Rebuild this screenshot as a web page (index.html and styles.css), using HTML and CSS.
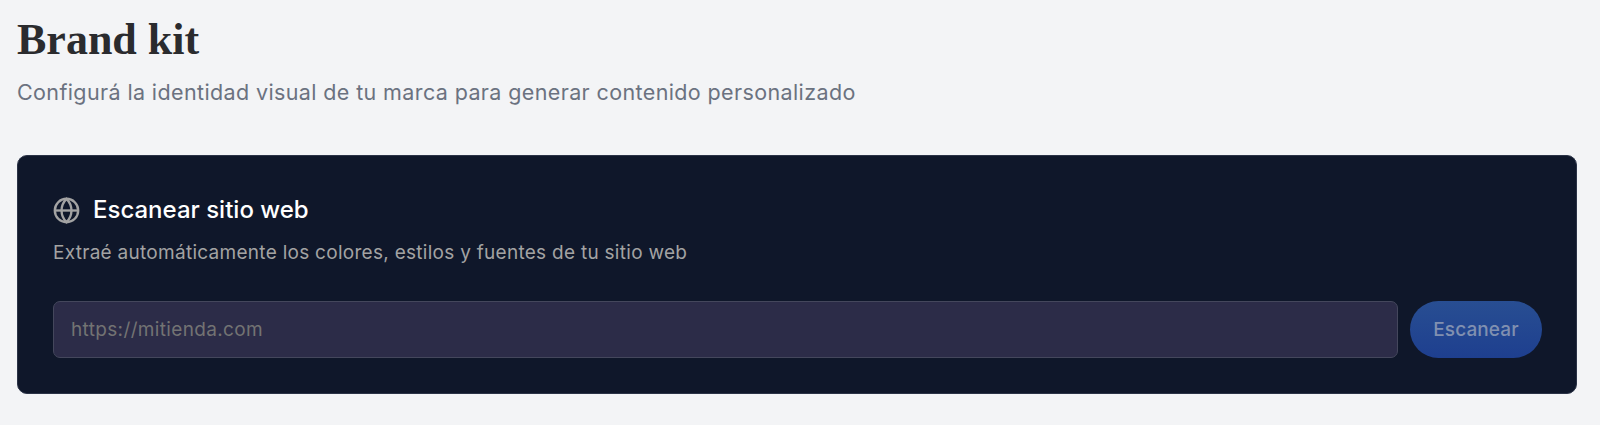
FILE: index.html
```html
<!DOCTYPE html>
<html lang="es">
<head>
    <meta charset="UTF-8">
    <meta name="viewport" content="width=device-width, initial-scale=1.0">
    <title>Brand kit</title>
    <link rel="stylesheet" href="styles.css">
</head>
<body>

    <h1 class="page-title">Brand kit</h1>
    <p class="page-subtitle">Configurá la identidad visual de tu marca para generar contenido personalizado</p>

    <div class="scan-card">
        <div class="scan-header">
            <svg class="scan-icon" viewBox="0 0 24 24" fill="none" stroke="currentColor" stroke-width="2.1">
                <circle cx="12" cy="12" r="10.4"></circle>
                <path d="M1.6 12h20.8"></path>
                <path d="M12 1.6c2.9 2.9 4.4 6.4 4.4 10.4s-1.5 7.5-4.4 10.4c-2.9-2.9-4.4-6.4-4.4-10.4s1.5-7.5 4.4-10.4z"></path>
            </svg>
            <h2 class="scan-title">Escanear sitio web</h2>
        </div>
        <p class="scan-text">Extraé automáticamente los colores, estilos y fuentes de tu sitio web</p>

        <div class="scan-form">
            <input class="scan-input" type="text" placeholder="https://mitienda.com">
            <button class="scan-button">Escanear</button>
        </div>
    </div>

</body>
</html>
```

FILE: styles.css
```css
body {
    font-family: 'Inter', 'Liberation Sans', sans-serif;
    background-color: #f3f4f6;
    margin: 0;
    padding: 16px 23px 0 17px;
}
.page-title {
    font-family: 'Liberation Serif', serif;
    font-size: 44px;
    line-height: 48px;
    font-weight: 700;
    color: #2a2b2e;
    margin: 0;
}
.page-subtitle {
    font-size: 21.5px;
    line-height: 28px;
    letter-spacing: 0.38px;
    color: #6b7280;
    margin: 14px 0 0;
}
.scan-card {
    background-color: #0f172a;
    border: 1px solid #2b3347;
    border-radius: 10px;
    padding: 38px 34px 35px 35px;
    margin-top: 49px;
}
.scan-header {
    display: flex;
    align-items: center;
    gap: 13px;
}
.scan-icon {
    width: 27px;
    height: 27px;
    color: #a3a3a3;
}
.scan-title {
    font-size: 24px;
    line-height: 32px;
    font-weight: 500;
    color: #ffffff;
    margin: 0;
}
.scan-text {
    font-size: 19px;
    line-height: 26px;
    letter-spacing: 0.28px;
    color: #a3a3a3;
    margin: 14px 0 0;
}
.scan-form {
    display: flex;
    gap: 12px;
    margin-top: 35px;
}
.scan-input {
    flex: 1;
    height: 57px;
    box-sizing: border-box;
    padding: 0 17px;
    font-family: inherit;
    font-size: 19px;
    letter-spacing: 0.35px;
    color: #fff;
    background-color: #2c2c48;
    border: 1px solid #44475c;
    border-radius: 7px;
}
.scan-input::placeholder {
    color: #737373;
}
.scan-button {
    width: 132px;
    height: 57px;
    font-family: inherit;
    font-size: 19px;
    font-weight: 500;
    letter-spacing: 0.1px;
    color: #8090b0;
    background: linear-gradient(#284e92, #1e3f8f);
    border: none;
    border-radius: 29px;
}
```
